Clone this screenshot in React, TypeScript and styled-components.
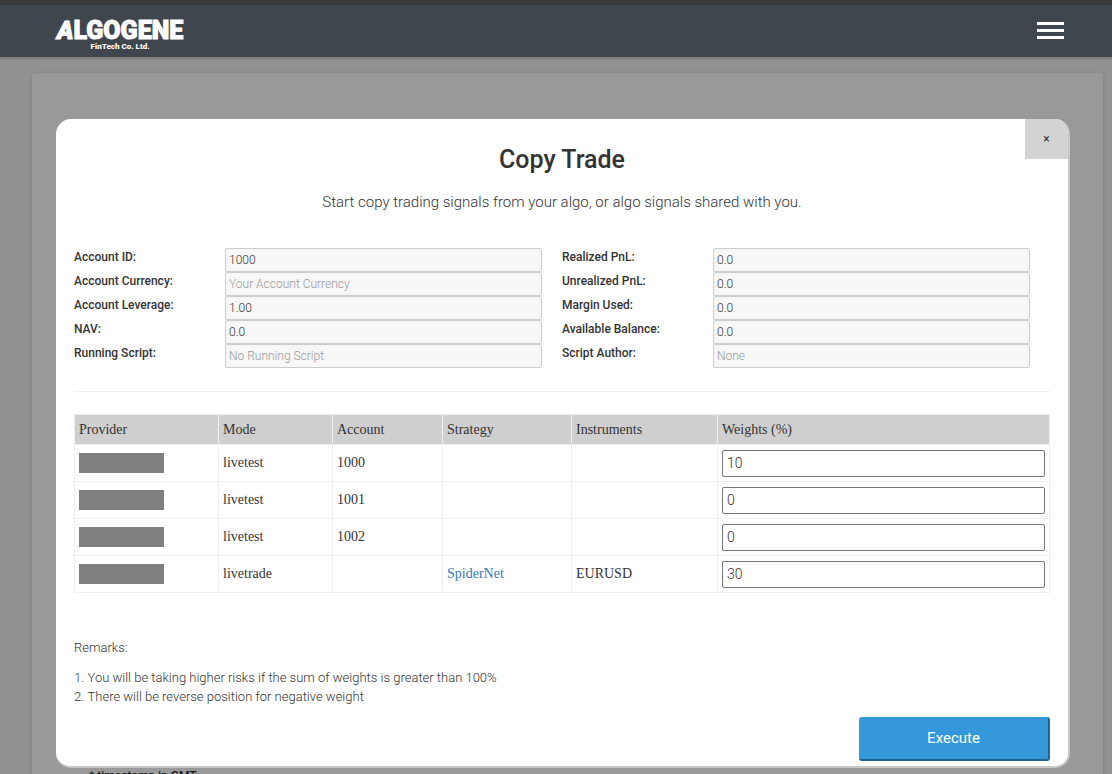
import React, { useState } from "react";
import styled, { createGlobalStyle } from "styled-components";

const Global = createGlobalStyle`
  *, *::before, *::after { box-sizing: border-box; }
  html, body { margin: 0; height: 100%; overflow: hidden; }
  body {
    background: #929292;
    color: #333;
    font-family: Roboto, "Liberation Sans", sans-serif;
    font-size: 13px;
    font-weight: 300;
  }
  #root { height: 100%; }
`;

const Page = styled.div`
  display: flex;
  flex-direction: column;
  min-height: 100%;
`;

const Header = styled.header`
  display: flex;
  align-items: center;
  justify-content: space-between;
  height: 57px;
  padding: 0 48px 1px 57px;
  border-top: 5px solid #3a3a3a;
  background: #40464d;
  box-shadow: 0 1px 4px rgba(0, 0, 0, 0.25);
`;

const Logo = styled.a`
  display: flex;
  flex-direction: column;
  align-items: center;
  padding-top: 8px;
  color: #fff;
  text-decoration: none;
`;

const LogoName = styled.span`
  font-size: 25px;
  line-height: 24px;
  font-weight: 900;
  -webkit-text-stroke: 1px #fff;
`;

const LogoSlant = styled.span`
  font-style: italic;
`;

const LogoSub = styled.span`
  font-size: 8px;
  line-height: 8px;
  font-weight: 900;
`;

const MenuButton = styled.button`
  display: flex;
  flex-direction: column;
  gap: 4px;
  width: 27px;
  padding: 0;
  border: 0;
  background: none;
`;

const MenuBar = styled.span`
  height: 3px;
  background: #fff;
`;

const Card = styled.main`
  display: flex;
  flex-direction: column;
  justify-content: flex-end;
  height: 712px;
  margin: 16px 9px 0 32px;
  padding: 0 57px;
  border-radius: 4px;
  background: #999;
  box-shadow: 0 1px 4px rgba(0, 0, 0, 0.15);
`;

const CardNote = styled.p`
  margin: 0;
  color: #1c1c1c;
  font-size: 12px;
  line-height: 18px;
  font-weight: 500;
`;

const Overlay = styled.div`
  position: fixed;
  inset: 0;
  display: flex;
  align-items: flex-start;
  padding: 119px 42px 0 56px;
`;

const Dialog = styled.section`
  position: relative;
  flex: 1;
  padding: 24px 18px 5px;
  overflow: hidden;
  border: solid #c8c8c8;
  border-width: 0 2px 2px 0;
  border-radius: 15px;
  background: #fff;
`;

const CloseButton = styled.button`
  position: absolute;
  top: 0;
  right: 0;
  width: 43px;
  height: 40px;
  padding: 0;
  border: 0;
  background: #d3d3d3;
  color: #333;
  font: 400 12px/40px Roboto, sans-serif;
`;

const Title = styled.h1`
  margin: 0;
  font-size: 25px;
  line-height: 34px;
  font-weight: 500;
  text-align: center;
`;

const Intro = styled.p`
  margin: 14px 0 35px;
  font-size: 15px;
  line-height: 22px;
  text-align: center;
`;

const Fields = styled.div`
  display: grid;
  grid-template-columns: 1fr 1fr;
`;

const FieldRow = styled.div`
  display: grid;
  grid-template-columns: 151fr 317fr;
  height: 24px;
  padding-right: 20px;
`;

const FieldLabel = styled.label`
  font-size: 12px;
  line-height: 18px;
  font-weight: 500;
`;

const FieldInput = styled.input`
  width: 100%;
  height: 24px;
  padding: 0 3px;
  border: 1px solid #ccc;
  border-radius: 2px;
  background: #f7f7f7;
  color: #333;
  font: 300 12px Roboto, sans-serif;
  &::placeholder { color: #999; opacity: 1; }
`;

const Divider = styled.hr`
  height: 1px;
  margin: 23px 0 22px;
  border: 0;
  background: #eee;
`;

const Table = styled.table`
  width: 100%;
  border-collapse: collapse;
  table-layout: fixed;
  font-family: "Liberation Serif", serif;
  font-size: 14px;
  font-weight: 400;
`;

const Col = styled.col<{ $w?: number }>`
  width: ${(p) => (p.$w ? `${p.$w}px` : "auto")};
`;

const Th = styled.th`
  height: 30px;
  padding: 0 4px;
  border: 1px solid #eee;
  background: #cfcfcf;
  font-weight: 400;
  text-align: left;
`;

const Td = styled.td`
  height: 37px;
  padding: 0 4px;
  border: 1px solid #eee;
`;

const Redacted = styled.span`
  display: block;
  width: 85px;
  height: 20px;
  background: #7f7f7f;
`;

const StrategyLink = styled.a`
  color: #337ab7;
  text-decoration: none;
`;

const WeightInput = styled.input`
  display: block;
  width: 100%;
  height: 27px;
  padding: 0 4px;
  border: 1px solid #767676;
  border-radius: 2px;
  background: #fff;
  color: #333;
  font: 300 14px Roboto, sans-serif;
`;

const Remarks = styled.div`
  margin-top: 45px;
  font-size: 13px;
  line-height: 19px;
`;

const RemarkList = styled.ol`
  margin: 11px 0 0;
  padding: 0;
  list-style-position: inside;
`;

const Actions = styled.div`
  display: flex;
  justify-content: flex-end;
  margin-top: 11px;
`;

const ExecuteButton = styled.button`
  width: 191px;
  height: 44px;
  padding: 0;
  border: solid #1f6593;
  border-width: 0 2px 2px 0;
  border-radius: 3px;
  background: #3498db;
  color: #fff;
  font: 400 15px Roboto, sans-serif;
`;

type Field = { id: string; label: string; value?: string; placeholder?: string };

const fields: Field[] = [
  { id: "account-id", label: "Account ID:", value: "1000" },
  { id: "realized", label: "Realized PnL:", value: "0.0" },
  { id: "currency", label: "Account Currency:", placeholder: "Your Account Currency" },
  { id: "unrealized", label: "Unrealized PnL:", value: "0.0" },
  { id: "leverage", label: "Account Leverage:", value: "1.00" },
  { id: "margin", label: "Margin Used:", value: "0.0" },
  { id: "nav", label: "NAV:", value: "0.0" },
  { id: "balance", label: "Available Balance:", value: "0.0" },
  { id: "script", label: "Running Script:", placeholder: "No Running Script" },
  { id: "author", label: "Script Author:", placeholder: "None" },
];

const columns = [
  { name: "Provider", width: 144 },
  { name: "Mode", width: 114 },
  { name: "Account", width: 110 },
  { name: "Strategy", width: 129 },
  { name: "Instruments", width: 146 },
  { name: "Weights (%)" },
];

const signals = [
  { mode: "livetest", account: "1000", strategy: "", instruments: "", weight: "10" },
  { mode: "livetest", account: "1001", strategy: "", instruments: "", weight: "0" },
  { mode: "livetest", account: "1002", strategy: "", instruments: "", weight: "0" },
  { mode: "livetrade", account: "", strategy: "SpiderNet", instruments: "EURUSD", weight: "30" },
];

export default function App() {
  const [weights, setWeights] = useState(signals.map((s) => s.weight));
  const setWeight = (index: number, value: string) =>
    setWeights((prev) => prev.map((w, i) => (i === index ? value : w)));

  return (
    <>
      <Global />
      <Page>
        <Header>
          <Logo href="#">
            <LogoName><LogoSlant>A</LogoSlant>LGOGENE</LogoName>
            <LogoSub>FinTech Co. Ltd.</LogoSub>
          </Logo>
          <MenuButton aria-label="Menu">
            <MenuBar />
            <MenuBar />
            <MenuBar />
          </MenuButton>
        </Header>
        <Card>
          <CardNote>* timestamp in GMT</CardNote>
        </Card>
      </Page>
      <Overlay>
        <Dialog role="dialog" aria-labelledby="dialog-title">
          <CloseButton aria-label="Close">×</CloseButton>
          <Title id="dialog-title">Copy Trade</Title>
          <Intro>Start copy trading signals from your algo, or algo signals shared with you.</Intro>
          <Fields>
            {fields.map((f) => (
              <FieldRow key={f.id}>
                <FieldLabel htmlFor={f.id}>{f.label}</FieldLabel>
                <FieldInput id={f.id} readOnly defaultValue={f.value} placeholder={f.placeholder} />
              </FieldRow>
            ))}
          </Fields>
          <Divider />
          <Table>
            <colgroup>
              {columns.map((c) => (
                <Col key={c.name} $w={c.width} />
              ))}
            </colgroup>
            <thead>
              <tr>
                {columns.map((c) => (
                  <Th key={c.name} scope="col">{c.name}</Th>
                ))}
              </tr>
            </thead>
            <tbody>
              {signals.map((s, i) => (
                <tr key={i}>
                  <Td><Redacted /></Td>
                  <Td>{s.mode}</Td>
                  <Td>{s.account}</Td>
                  <Td>{s.strategy && <StrategyLink href="#">{s.strategy}</StrategyLink>}</Td>
                  <Td>{s.instruments}</Td>
                  <Td>
                    <WeightInput
                      aria-label={`Weight ${i + 1}`}
                      value={weights[i]}
                      onChange={(e) => setWeight(i, e.target.value)}
                    />
                  </Td>
                </tr>
              ))}
            </tbody>
          </Table>
          <Remarks>
            Remarks:
            <RemarkList>
              <li>You will be taking higher risks if the sum of weights is greater than 100%</li>
              <li>There will be reverse position for negative weight</li>
            </RemarkList>
          </Remarks>
          <Actions>
            <ExecuteButton type="button">Execute</ExecuteButton>
          </Actions>
        </Dialog>
      </Overlay>
    </>
  );
}
